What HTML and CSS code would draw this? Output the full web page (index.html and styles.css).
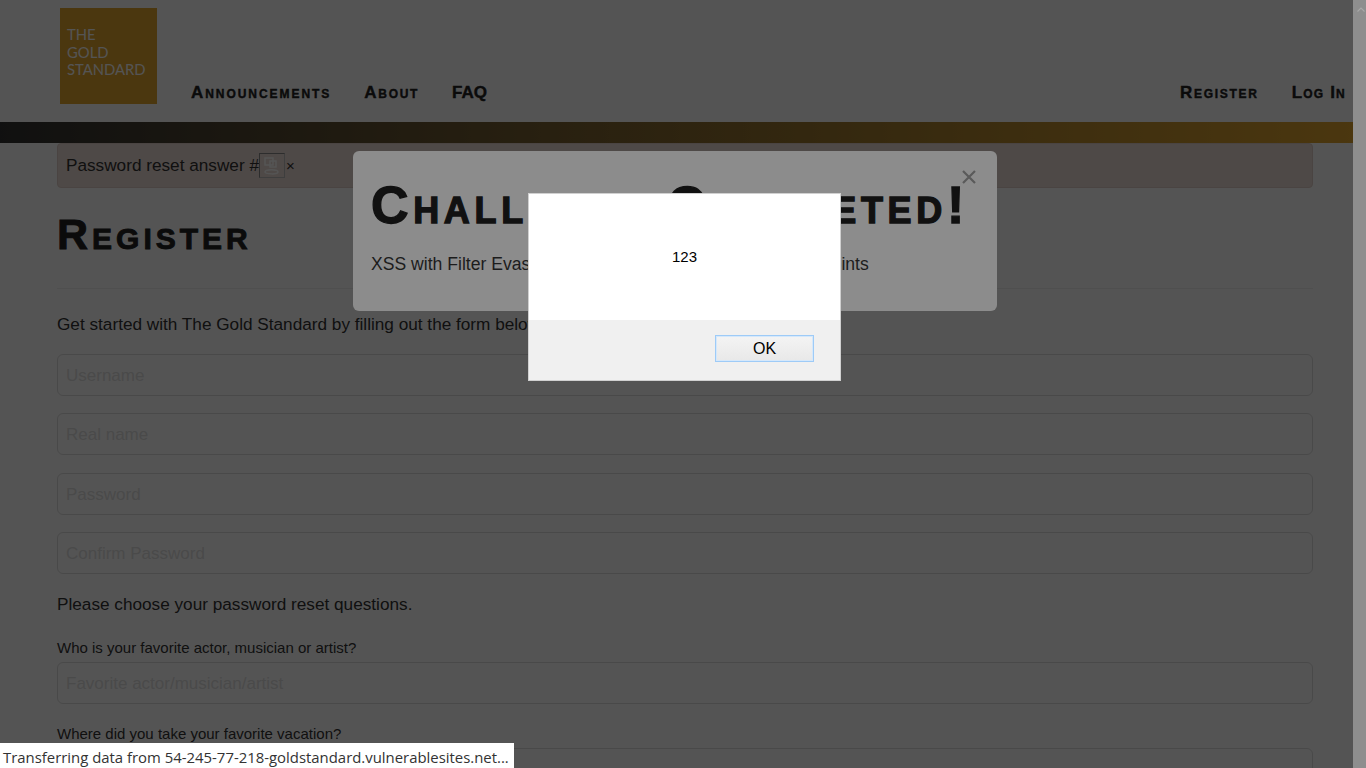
FILE: index.html
```html
<!DOCTYPE html>
<html lang="en">
<head>
  <meta charset="UTF-8">
  <meta name="viewport" content="width=device-width, initial-scale=1.0">
  <title>Register - The Gold Standard</title>
  <link rel="stylesheet" href="styles.css">
</head>
<body>
  <div class="page">
    <!-- Header -->
    <div class="header">
      <div class="logo">THE<br>GOLD<br>STANDARD</div>
      <div class="nav">
        <a href="#" class="nav-wide">Announcements</a>
        <a href="#">About</a>
        <a href="#" class="nav-plain">FAQ</a>
      </div>
      <div class="nav nav-right">
        <a href="#">Register</a>
        <a href="#" class="nav-tight">Log In</a>
      </div>
    </div>
    <div class="gold-bar"></div>

    <!-- Main Content -->
    <div class="content">
      <div class="alert">
        <span>Password reset answer #</span>
        <span class="broken-img">
          <svg width="19" height="19" viewBox="0 0 19 19" fill="none" stroke="#fff" stroke-width="1.5">
            <path d="M3 2h8v7h-8z"/>
            <path d="M8 5h6v6h-6z"/>
            <path d="M3 16c0-3 13-3 13 0s-13 2-13 0z"/>
          </svg>
        </span>
        <span class="alert-x">×</span>
      </div>

      <h1 class="page-title">Register</h1>
      <hr class="rule">
      <p class="intro">Get started with The Gold Standard by filling out the form below.</p>

      <form class="form">
        <input class="field" type="text" placeholder="Username">
        <input class="field" type="text" placeholder="Real name">
        <input class="field" type="password" placeholder="Password">
        <input class="field" type="password" placeholder="Confirm Password">
      </form>

      <p class="reset-intro">Please choose your password reset questions.</p>

      <form class="form-questions">
        <div class="form-group">
          <label for="q1">Who is your favorite actor, musician or artist?</label>
          <input class="field" id="q1" type="text" placeholder="Favorite actor/musician/artist">
        </div>
        <div class="form-group">
          <label for="q2">Where did you take your favorite vacation?</label>
          <input class="field" id="q2" type="text">
        </div>
      </form>
    </div>

    <div class="backdrop"></div>

    <!-- Challenge modal -->
    <div class="modal">
      <svg class="modal-close" width="14" height="14" viewBox="0 0 14 14" stroke="#5a5a5a" stroke-width="2.2">
        <path d="M1 1l12 12M13 1l-12 12"/>
      </svg>
      <h2>Challenge Completed!</h2>
      <p>XSS with Filter Evasion - Exploiting Insecure Account Endpoints</p>
    </div>
  </div>

  <div class="scrollbar">
    <svg width="8" height="5" viewBox="0 0 8 5" fill="none" stroke="#a8a8a8" stroke-width="1.1">
      <path d="M0.500 4.500l3.500-3.500 3.500 3.500"/>
    </svg>
  </div>

  <!-- Browser alert -->
  <div class="dialog">
    <div class="dialog-body">123</div>
    <div class="dialog-foot">
      <button class="dialog-ok" type="button">OK</button>
    </div>
  </div>

  <div class="status">Transferring data from 54-245-77-218-goldstandard.vulnerablesites.net...</div>
</body>
</html>
```

FILE: styles.css
```css
html, body {
  height: 100%;
}

body {
  font-family: "Liberation Sans", Arial, sans-serif;
  margin: 0;
  padding: 0;
  background-color: #fff;
  color: #333;
  display: flex;
  overflow: hidden;
}

.page {
  flex: 1;
  min-width: 0;
  height: 100vh;
  overflow: hidden;
  position: relative;
}

.header {
  height: 122px;
  box-sizing: border-box;
  padding: 8px 7px 0 60px;
  display: flex;
  align-items: flex-start;
}

.logo {
  width: 97px;
  height: 96px;
  box-sizing: border-box;
  padding-top: 18px;
  padding-left: 7px;
  background-color: #e2a62e;
  color: #fff;
  font-family: Lato, sans-serif;
  font-size: 14.800px;
  line-height: 17.5px;
}

.nav {
  display: flex;
  gap: 33px;
  margin-left: 34px;
  margin-top: 75px;
}

.nav-right {
  margin-left: auto;
}

.nav a {
  color: #222;
  text-decoration: none;
  font-size: 17px;
  line-height: 20px;
  font-weight: bold;
  font-variant: small-caps;
  letter-spacing: 1.7px;
  -webkit-text-stroke: 0.4px #222;
}

.nav a.nav-wide {
  letter-spacing: 1.95px;
}

.nav a.nav-plain {
  letter-spacing: 0;
}

.nav a.nav-tight {
  letter-spacing: 1.2px;
}

.gold-bar {
  height: 21px;
  background: linear-gradient(to right, #333, #e2a62e);
}

.content {
  padding: 0 40px 0 57px;
}

.alert {
  height: 45px;
  box-sizing: border-box;
  display: flex;
  align-items: center;
  padding: 0 8px;
  background-color: #ecdcd6;
  border: 1px solid #e0cfc8;
  border-radius: 4px;
  font-size: 17.200px;
}

.broken-img {
  width: 26px;
  height: 25px;
  box-sizing: border-box;
  border: 1px solid #bbb;
  border-top-color: #888;
  border-left-color: #888;
  display: flex;
  align-items: center;
  justify-content: center;
}

.alert-x {
  margin-left: 1px;
  font-size: 15px;
}

.page-title {
  margin: 21px 0 0;
  font-size: 43px;
  line-height: 50px;
  font-weight: bold;
  font-variant: small-caps;
  letter-spacing: 4px;
  color: #222;
  -webkit-text-stroke: 0.9px #222;
}

.rule {
  margin: 29px 0 0;
  border: 0;
  border-top: 1px solid #eee;
}

.intro {
  margin: 25px 0 0;
  font-size: 17.200px;
  line-height: 20px;
}

.form {
  margin-top: 20px;
  display: flex;
  flex-direction: column;
  gap: 17.300px;
}

.field {
  width: 100%;
  height: 42px;
  box-sizing: border-box;
  display: block;
  padding: 2px 8px 0;
  border: 1px solid #ddd;
  border-radius: 6px;
  background-color: #fff;
  font-family: inherit;
  font-size: 17px;
}

.field::placeholder {
  color: #e0e0e0;
}

.reset-intro {
  margin: 20.500px 0 0;
  font-size: 17.200px;
  line-height: 20px;
}

.form-questions {
  margin-top: 26px;
  display: flex;
  flex-direction: column;
  gap: 22px;
}

.form-group label {
  display: block;
  margin-bottom: 6px;
  font-size: 15px;
  line-height: 16px;
}

.backdrop {
  position: absolute;
  inset: 0;
  background-color: #000;
  opacity: 0.67;
}

.modal {
  position: absolute;
  left: 353px;
  top: 151px;
  width: 644px;
  height: 160px;
  box-sizing: border-box;
  padding: 0 18px;
  background-color: #8c8c8c;
  border-radius: 6px;
  color: #111;
}

.modal h2 {
  margin: 26px 0 0;
  font-size: 52px;
  line-height: 56px;
  font-weight: bold;
  font-variant: small-caps;
  white-space: nowrap;
  letter-spacing: 4.650px;
  -webkit-text-stroke: 1.3px #111;
}

.modal p {
  margin: 21px 0 0;
  font-size: 17.600px;
  line-height: 20px;
  color: #1c1c1c;
  white-space: nowrap;
}

.modal-close {
  position: absolute;
  left: 609px;
  top: 19px;
}

.scrollbar {
  width: 13px;
  height: 100vh;
  background-color: #8e8e8e;
  display: flex;
  justify-content: center;
  padding: 7px 0 0 3px;
  box-sizing: border-box;
}

.dialog {
  position: absolute;
  left: 528px;
  top: 193px;
  width: 313px;
  height: 188px;
  box-sizing: border-box;
  border: 1px solid #d0d0d0;
  display: flex;
  flex-direction: column;
  background-color: #fff;
}

.dialog-body {
  height: 126px;
  box-sizing: border-box;
  padding-top: 54px;
  text-align: center;
  font-size: 15px;
  line-height: 17px;
  color: #000;
}

.dialog-foot {
  flex: 1;
  background-color: #f0f0f0;
  display: flex;
  justify-content: flex-end;
  align-items: flex-start;
  padding: 15px 26px 0 0;
}

.dialog-ok {
  width: 99px;
  height: 27px;
  padding: 0;
  border: 1px solid #9ecbf7;
  box-shadow: inset 0 0 0 1px #d5e8fb;
  background: linear-gradient(#f4f4f4, #e8e8e8);
  color: #000;
  font-family: inherit;
  font-size: 16px;
}

.status {
  position: absolute;
  left: 0;
  bottom: 0;
  width: 514px;
  height: 25px;
  box-sizing: border-box;
  padding-left: 3px;
  background-color: #fff;
  color: #333;
  font-family: "Open Sans", sans-serif;
  font-size: 14.900px;
  line-height: 29px;
  white-space: nowrap;
  overflow: hidden;
}
```
